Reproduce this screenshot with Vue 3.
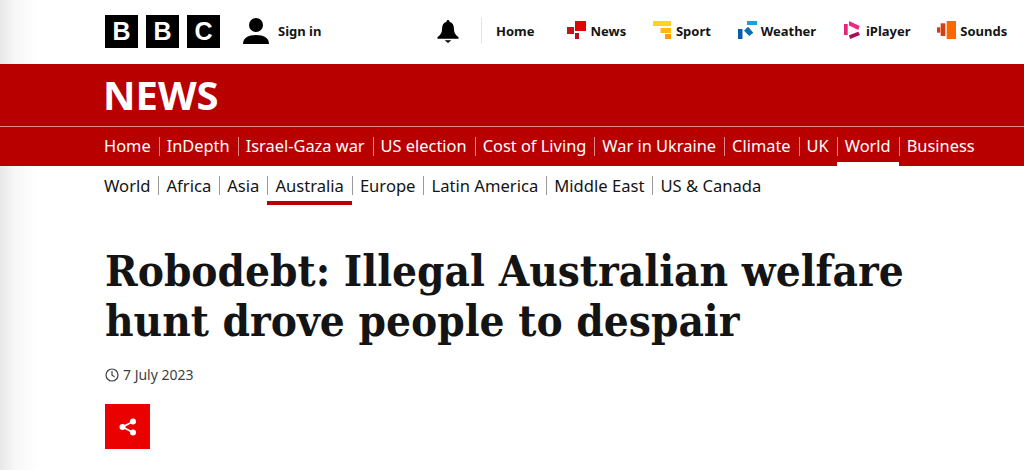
<script setup>
const mainNav = ['Home', 'InDepth', 'Israel-Gaza war', 'US election', 'Cost of Living', 'War in Ukraine', 'Climate', 'UK', 'World', 'Business']
const subNav = ['World', 'Africa', 'Asia', 'Australia', 'Europe', 'Latin America', 'Middle East', 'US & Canada']
</script>

<template>
  <div class="page">
    <header class="top">
      <div class="logo">
        <span>B</span><span>B</span><span>C</span>
      </div>
      <div class="signin">
        <svg class="user" viewBox="0 0 26 26"><circle cx="13" cy="7" r="7" /><path d="M0 26c0-6 5-9 13-9s13 3 13 9z" /></svg>
        <span>Sign in</span>
      </div>
      <svg class="bell" viewBox="0 0 22 24"><path d="M11 0c1 0 1.600.700 1.600 1.800 3.200.800 4.600 3.600 4.600 7.200 0 4 1.400 6.500 4.800 9v1.500H0V18c3.400-2.500 4.800-5 4.800-9 0-3.600 1.400-6.400 4.600-7.200C9.400.700 10 0 11 0z" /><path d="M7.500 21h7L11 24z" /></svg>
      <nav class="services">
        <a class="home">Home</a>
        <a>
          <svg viewBox="0 0 20 20"><rect x="8" y="0" width="11" height="10" fill="#e60000" /><rect x="0" y="6" width="7" height="7" fill="#c8101a" /><rect x="8" y="12" width="4" height="6" fill="#b80f1c" /></svg>
          News
        </a>
        <a>
          <svg viewBox="0 0 20 20"><rect x="0" y="0" width="18" height="5" fill="#ffd21f" /><rect x="7.500" y="7" width="10.500" height="5" fill="#ffb812" /><rect x="12" y="13" width="6" height="5" fill="#ff9a0a" /></svg>
          Sport
        </a>
        <a>
          <svg viewBox="0 0 20 20"><rect x="0" y="8" width="4.500" height="10" fill="#0b5ca8" /><rect x="9" y="0" width="10" height="4" fill="#1f9ede" /><path d="M6 9.700l4-4 5.300 6-4 3.300z" fill="#0e6cb5" /></svg>
          Weather
        </a>
        <a>
          <svg viewBox="0 0 20 20"><rect x="1" y="3" width="3.700" height="11" fill="#e5247e" /><path d="M6 0l10.700 5-1.400 4L6 4.500z" fill="#ee2a83" /><path d="M15.300 10.700 17 14 7 18l-1-3.700z" fill="#a90e5a" /></svg>
          iPlayer
        </a>
        <a>
          <svg viewBox="0 0 20 20"><rect x="0" y="6.300" width="3.300" height="5.400" fill="#d23c10" /><rect x="3.700" y="2.300" width="4.600" height="12.700" fill="#d2410f" /><rect x="9.700" y="0" width="9.300" height="18" fill="#ff6600" /></svg>
          Sounds
        </a>
      </nav>
    </header>

    <div class="band">
      <div class="title">NEWS</div>
      <nav class="main-nav">
        <div v-for="item in mainNav" :key="item" :class="['main-item', { on: item === 'World' }]">
          <span>{{ item }}</span>
        </div>
      </nav>
    </div>

    <nav class="sub-nav">
      <div v-for="item in subNav" :key="item" :class="['sub-item', { on: item === 'Australia' }]">
        <span>{{ item }}</span>
      </div>
    </nav>

    <main class="article">
      <h1>Robodebt: Illegal Australian welfare hunt drove people to despair</h1>
      <div class="date">
        <svg viewBox="0 0 14 14" fill="none" stroke="currentColor" stroke-width="1.200"><circle cx="7" cy="7" r="6" /><path d="M7 3v4.200l2.600 1.600" /></svg>
        <span>7 July 2023</span>
      </div>
      <button class="share">
        <svg viewBox="0 0 18 18"><circle cx="14" cy="3.500" r="3" /><circle cx="3.500" cy="9" r="3" /><circle cx="14" cy="14.500" r="3" /><path d="M14 3.500 3.500 9 14 14.500" fill="none" stroke="#fff" stroke-width="1.600" /></svg>
      </button>
    </main>
  </div>
</template>

<style>
html, body { margin: 0; background: #fff; }
</style>

<style scoped>
.page {
  width: 1024px;
  height: 470px;
  overflow: hidden;
  font-family: "Noto Sans", "Open Sans", sans-serif;
  color: #141414;
  background: linear-gradient(90deg, #e8e8e8 0, #f8f8f8 16px, #fff 40px);
}

/* Barra superior */
.top { height: 64px; display: flex; align-items: center; padding: 0 0 2px 105px; box-sizing: border-box; white-space: nowrap; }
.logo { display: flex; gap: 8px; flex-shrink: 0; margin-top: 1px; }
.logo span {
  width: 33px; height: 33px; background: #000; color: #fff;
  display: flex; align-items: center; justify-content: center;
  font-family: "Liberation Sans", sans-serif; font-weight: 700; font-size: 25px;
}
.signin { display: flex; align-items: center; gap: 9px; margin-left: 23px; font-size: 13px; font-weight: 700; flex-shrink: 0; }
.user { width: 26px; height: 26px; fill: #000; flex-shrink: 0; }
.bell { width: 22px; height: 23px; fill: #000; margin-left: 116px; flex-shrink: 0; }
.services { display: flex; align-items: center; margin-left: 22px; font-size: 13px; font-weight: 700; flex-shrink: 0; }
.services a { display: flex; align-items: center; gap: 3px; margin-right: 26.750px; }
.services svg { width: 20px; height: 20px; flex-shrink: 0; }
.services a.home { border-left: 1px solid #e4e4e4; height: 26px; padding-left: 13.500px; margin-right: 33px; }

/* Banda roja */
.band { background: #b80000; color: #fff; height: 102px; }
.title { height: 62px; padding-left: 103px; font-size: 40px; font-weight: 700; line-height: 62px; border-bottom: 1px solid #e08a8a; }
.main-nav { display: flex; padding-left: 96px; height: 39px; }
.main-item { position: relative; display: flex; align-items: center; padding: 0 8px 2px; font-size: 16.400px; white-space: nowrap; }
.main-item + .main-item::before { content: ""; position: absolute; left: 0; top: 10px; height: 19px; width: 1px; background: #e08a8a; }
.main-item.on::after { content: ""; position: absolute; left: 0; right: 0; bottom: 0; height: 4px; background: #fff; }

/* Subnavegacion */
.sub-nav { display: flex; padding-left: 96px; height: 39px; }
.sub-item { position: relative; display: flex; align-items: center; padding: 0 8px; font-size: 16.600px; white-space: nowrap; }
.sub-item + .sub-item::before { content: ""; position: absolute; left: 0; top: 10px; height: 19px; width: 1px; background: #999; }
.sub-item.on::after { content: ""; position: absolute; left: 0; right: 0; bottom: 0; height: 4px; background: #b80000; }

/* Articulo */
.article { padding: 41px 0 0 105px; }
h1 { margin: 0; width: 810px; font-family: "DejaVu Serif Condensed", "DejaVu Serif", serif; font-stretch: condensed; font-weight: 700; font-size: 43.700px; line-height: 50px; color: #141414; }
.date { display: flex; align-items: center; gap: 4px; margin-top: 19px; font-size: 14px; color: #3f3f42; }
.date svg { width: 14px; height: 14px; flex-shrink: 0; }
.share { display: flex; align-items: center; justify-content: center; margin-top: 20px; width: 45px; height: 45px; padding: 0; border: none; background: #eb0000; }
.share svg { width: 18px; height: 18px; fill: #fff; }
</style>
